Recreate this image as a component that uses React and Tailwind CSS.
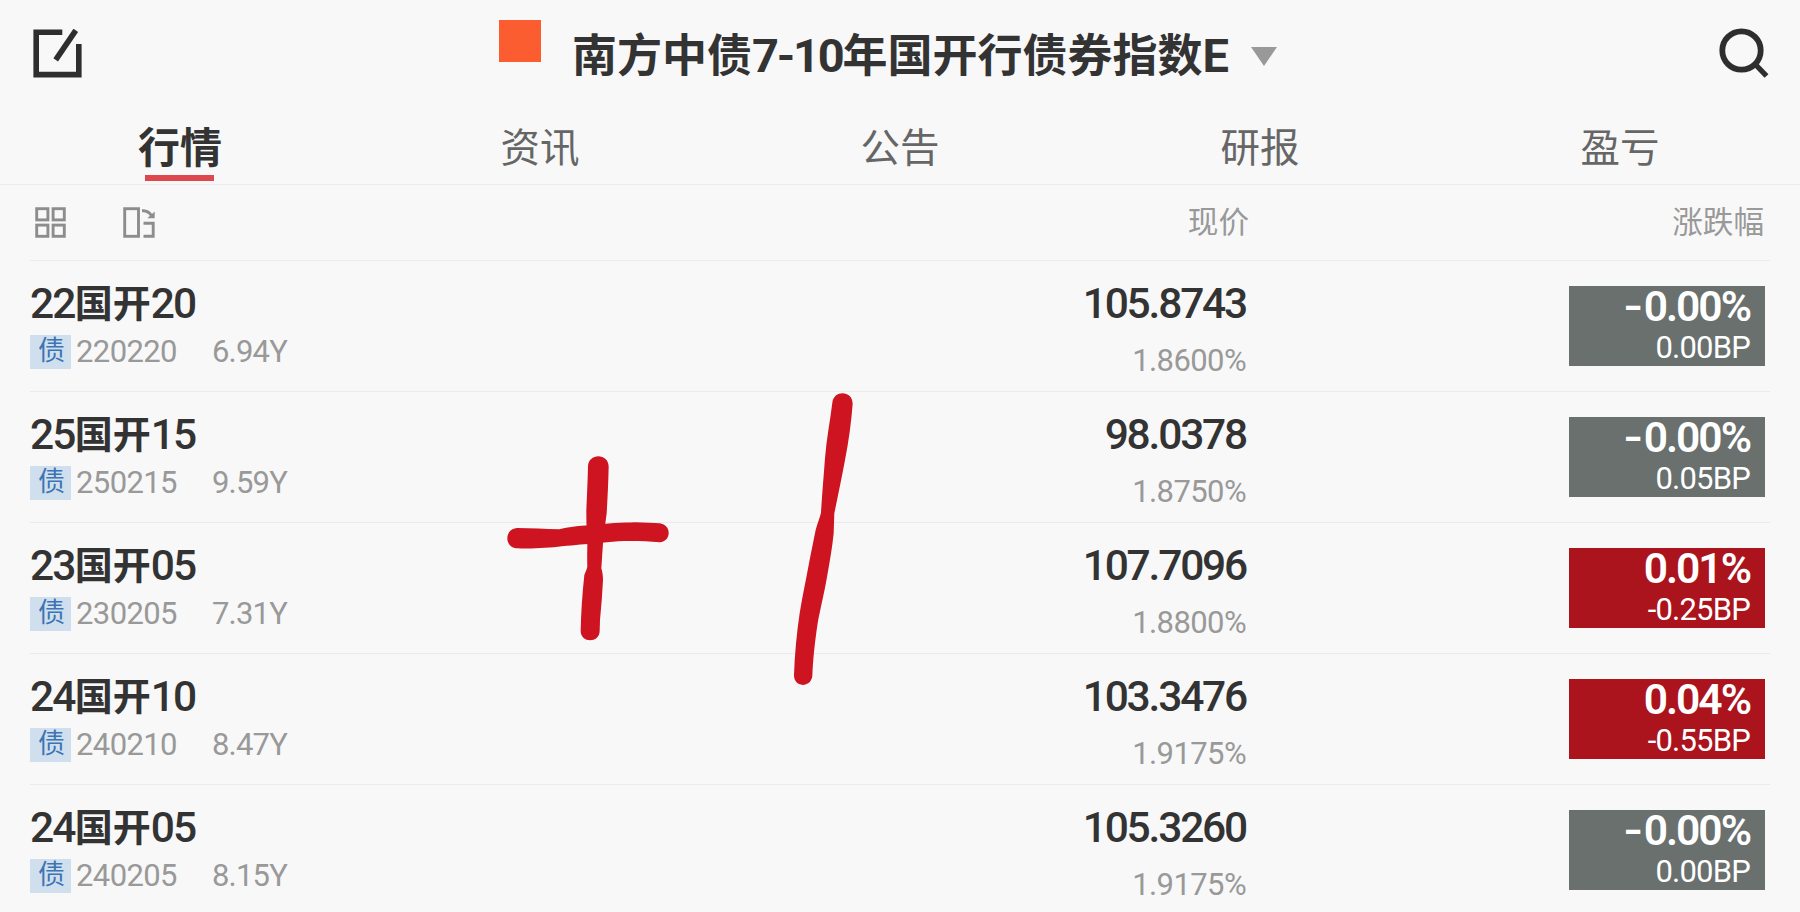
import React, { useState } from "react";

const tabs = ["行情", "资讯", "公告", "研报", "盈亏"];

const bonds = [
  { year: "22", no: "20", code: "220220", term: "6.94Y", price: "105.8743", rate: "1.8600%", change: "-0.00%", bp: "0.00BP" },
  { year: "25", no: "15", code: "250215", term: "9.59Y", price: "98.0378", rate: "1.8750%", change: "-0.00%", bp: "0.05BP" },
  { year: "23", no: "05", code: "230205", term: "7.31Y", price: "107.7096", rate: "1.8800%", change: "0.01%", bp: "-0.25BP" },
  { year: "24", no: "10", code: "240210", term: "8.47Y", price: "103.3476", rate: "1.9175%", change: "0.04%", bp: "-0.55BP" },
  { year: "24", no: "05", code: "240205", term: "8.15Y", price: "105.3260", rate: "1.9175%", change: "-0.00%", bp: "0.00BP" },
];

function EditIcon() {
  return (
    <svg width="50" height="50" viewBox="0 0 50 50" fill="none" stroke="#2e2e2e" strokeWidth="5.6">
      <path d="M29.3 3.3H3.2V45.6H45.8V15" />
      <path d="M42.8 1.3L22.7 30.8" />
    </svg>
  );
}

function SearchIcon() {
  return (
    <svg width="50" height="50" viewBox="0 0 50 50" fill="none" stroke="#2e2e2e">
      <circle cx="22.5" cy="22.5" r="19.2" strokeWidth="5.8" />
      <path d="M35.5 35.5L47.5 48" strokeWidth="5.4" />
    </svg>
  );
}

function GridIcon() {
  return (
    <svg width="31" height="31" viewBox="0 0 31 31" fill="none" stroke="#8d8d8d" strokeWidth="2.9">
      <rect x="1.7" y="1.7" width="11.2" height="11.2" />
      <rect x="18.1" y="1.7" width="11.2" height="11.2" />
      <rect x="1.7" y="18.1" width="11.2" height="11.2" />
      <rect x="18.1" y="18.1" width="11.2" height="11.2" />
    </svg>
  );
}

function ColumnsIcon() {
  return (
    <svg width="32" height="31" viewBox="0 0 32 31" fill="none" stroke="#8d8d8d" strokeWidth="2.9">
      <rect x="1.7" y="1.7" width="13.8" height="27.6" />
      <path d="M19 3.8C23.5 3.4 26.5 5 28.7 9" />
      <path d="M31.7 4.5V11.3H24.3Z" fill="#8d8d8d" stroke="none" />
      <path d="M20.5 16.3H30.2V29.3H20.5" />
    </svg>
  );
}

// hand drawn "+1" on top of the list
function Scribble() {
  return (
    <svg className="absolute left-[490px] top-[380px]" width="400" height="320" viewBox="0 0 1200 960" fill="#ce1321">
      <path d="M82 444C125 444 165 447 208 448C245 440 265 438 300 436C350 430 400 428 435 427C465 427 490 430 509 430C545 434 545 484 509 487C470 484 430 482 385 484C340 487 300 492 215 499C180 504 120 507 82 505C42 503 42 446 82 444Z" />
      <path d="M294 260C294 218 356 218 356 260C355 305 353 350 350 400C345 435 342 465 339 490C338 515 335 540 334 565C337 575 339 585 339 600C337 640 334 680 330 720L329 752C329 790 272 790 272 752C273 700 277 640 283 585C286 576 290 570 292 560C291 535 292 510 292 490C290 450 289 420 289 390C291 345 293 300 294 260Z" />
      <path d="M1027 68C1031 30 1087 30 1088 71C1084 125 1076 185 1065 240C1055 295 1043 350 1033 400C1032 420 1032 440 1031 460C1027 500 1020 540 1013 580C1003 640 990 690 983 730C974 790 969 840 967 888C963 924 911 924 912 885C914 825 920 760 929 700C937 650 948 600 957 550C966 505 972 475 977 450C982 430 990 412 993 398C996 345 1001 290 1005 235C1009 180 1020 125 1027 68Z" />
    </svg>
  );
}

function BondRow({ bond }) {
  const isUp = !bond.change.startsWith("-");

  return (
    <div className="flex h-[131px] border-t border-[#ebebeb]">
      <div className="flex-1 pt-[18px]">
        <div className="h-[50px] text-[42.5px] leading-[50px] font-medium tracking-[-1.8px] text-[#333]">
          {bond.year}
          <span className="relative -top-px text-[38px] leading-none font-semibold tracking-normal">国开</span>
          {bond.no}
        </div>
        <div className="mt-[6px] flex h-[34px] text-[31px] leading-[34px] tracking-[-0.6px] text-[#999]">
          <span className="w-[41px] bg-[#d0dfee] pl-[8px] text-[27px] leading-[32px] text-[#3d74b4]">债</span>
          <span className="ml-[5px] w-[136px]">{bond.code}</span>
          <span className="tracking-[-0.8px]">{bond.term}</span>
        </div>
      </div>
      <div className="w-[300px] pt-[18px] text-right">
        <div className="text-[42.5px] leading-[50px] font-medium tracking-[-2.2px] text-[#333]">{bond.price}</div>
        <div className="mt-[11px] text-[31px] leading-[41px] tracking-[-0.6px] text-[#999]">{bond.rate}</div>
      </div>
      <div
        className={`ml-[323px] mr-[5px] mt-[25px] h-[80px] w-[196px] pr-[15px] text-right text-white ${
          isUp ? "bg-[#ab141d]" : "bg-[#6a706e]"
        }`}
      >
        <div className="text-[42.5px] leading-[42px] font-semibold tracking-[-2px]">
          {!isUp && <span className="mr-[3px] inline-block origin-right scale-x-125">-</span>}
          {bond.change.replace("-", "")}
        </div>
        <div className="mt-px text-[31px] leading-[38px] tracking-[-0.8px]">{bond.bp}</div>
      </div>
    </div>
  );
}

function App() {
  const [activeTab, setActiveTab] = useState(0);

  return (
    <div className="relative h-[912px] w-[1800px] overflow-hidden bg-[#f8f8f8] font-['Roboto','Noto_Sans_CJK_SC',sans-serif]">
      <header className="flex h-[106px] items-start justify-between pl-[33px] pr-[31px]">
        <button className="mt-[29px]">
          <EditIcon />
        </button>
        <div className="mr-[26px] flex items-start">
          <div className="mt-[20px] h-[42px] w-[42px] bg-[#fb5d30]"></div>
          <h1 className="ml-[31px] mt-[26px] text-[45px] leading-[60px] font-bold whitespace-nowrap text-[#333]">
            南方中债<span className="text-[47px] tracking-[-2.2px]">7-10</span>年国开行债券指数
            <span className="text-[47px]">E</span>
          </h1>
          <svg className="ml-[22px] mt-[47px]" width="26" height="19" viewBox="0 0 26 19">
            <path d="M0 0H26L13 19Z" fill="#999" />
          </svg>
        </div>
        <button className="mt-[28px]">
          <SearchIcon />
        </button>
      </header>

      <nav className="grid h-[78px] grid-cols-5">
        {tabs.map((tab, i) => (
          <button key={tab} className="flex flex-col items-center pt-[14px]" onClick={() => setActiveTab(i)}>
            <span
              className={
                i === activeTab
                  ? "text-[42px] leading-[57px] font-bold text-[#333]"
                  : "text-[39.5px] leading-[57px] text-[#666]"
              }
            >
              {tab}
            </span>
            {i === activeTab && <span className="-mt-[2px] mr-px h-[6px] w-[69px] bg-[#dd484f]"></span>}
          </button>
        ))}
      </nav>

      <div className="flex h-[76px] border-t border-[#ebebeb] pl-[35px] pr-[36px] text-[30.6px] leading-[76px] text-[#999]">
        <div className="flex flex-1 gap-[57px] pt-[22px]">
          <GridIcon />
          <ColumnsIcon />
        </div>
        <div>现价</div>
        <div className="w-[515px] text-right">涨跌幅</div>
      </div>

      <main className="mx-[30px]">
        {bonds.map((bond) => (
          <BondRow key={bond.code} bond={bond} />
        ))}
      </main>

      <Scribble />
    </div>
  );
}

export default App;
